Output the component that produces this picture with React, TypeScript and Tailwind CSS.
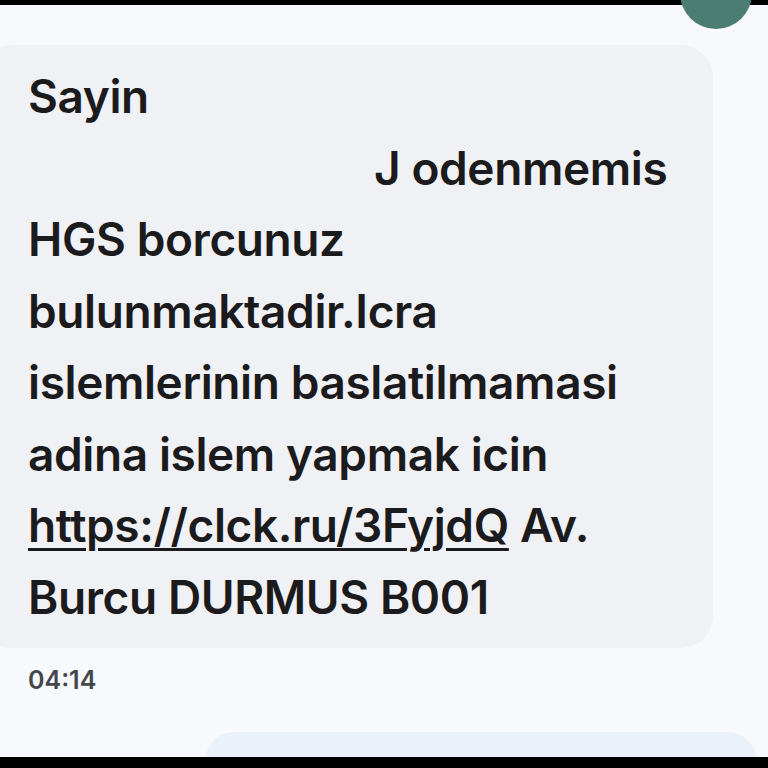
export default function App() {
  const lines = [
    "Sayin",
    null,
    "HGS borcunuz",
    "bulunmaktadir.Icra",
    "islemlerinin baslatilmamasi",
    "adina islem yapmak icin",
  ];

  return (
    <div
      className="flex h-[768px] w-[768px] flex-col overflow-hidden bg-[#f8f9fc]"
      style={{ fontFamily: "Inter, 'Liberation Sans', sans-serif" }}
    >
      <div className="h-[5px] w-full shrink-0 bg-black" />
      <div className="relative flex-1">
        {/* avatar peeking from the previous message */}
        <div className="absolute -top-[50px] left-[680px] h-[74px] w-[72px] rounded-full bg-[#4b7d73]" />

        <div className="pt-[40px]">
          <div className="-ml-[20px] w-[733px] rounded-[32px] bg-[#f0f1f4] pb-[15px] pl-[48px] pr-[16px] pt-[16px] text-[46px] font-semibold leading-[71.5px] tracking-[-0.4px] text-[#1b1b1d]">
            {lines.map((line, i) =>
              line === null ? (
                <div key={i} className="whitespace-nowrap pl-[346px]">
                  J odenmemis
                </div>
              ) : (
                <div key={i} className="whitespace-nowrap">{line}</div>
              )
            )}
            <div className="whitespace-nowrap">
              <span className="underline decoration-[3px] underline-offset-[6px]">https://clck.ru/3FyjdQ</span> Av.
            </div>
            <div className="whitespace-nowrap">Burcu DURMUS B001</div>
          </div>

          <p className="mt-[14px] pl-[28px] text-[25px] font-semibold text-[#45474b]">04:14</p>

          <div className="ml-[205px] mt-[32px] h-[60px] w-[552px] rounded-[30px] bg-[#eaf1f8]" />
        </div>
      </div>
      <div className="absolute left-0 top-[757px] h-[11px] w-[768px] bg-black" />
    </div>
  );
}
